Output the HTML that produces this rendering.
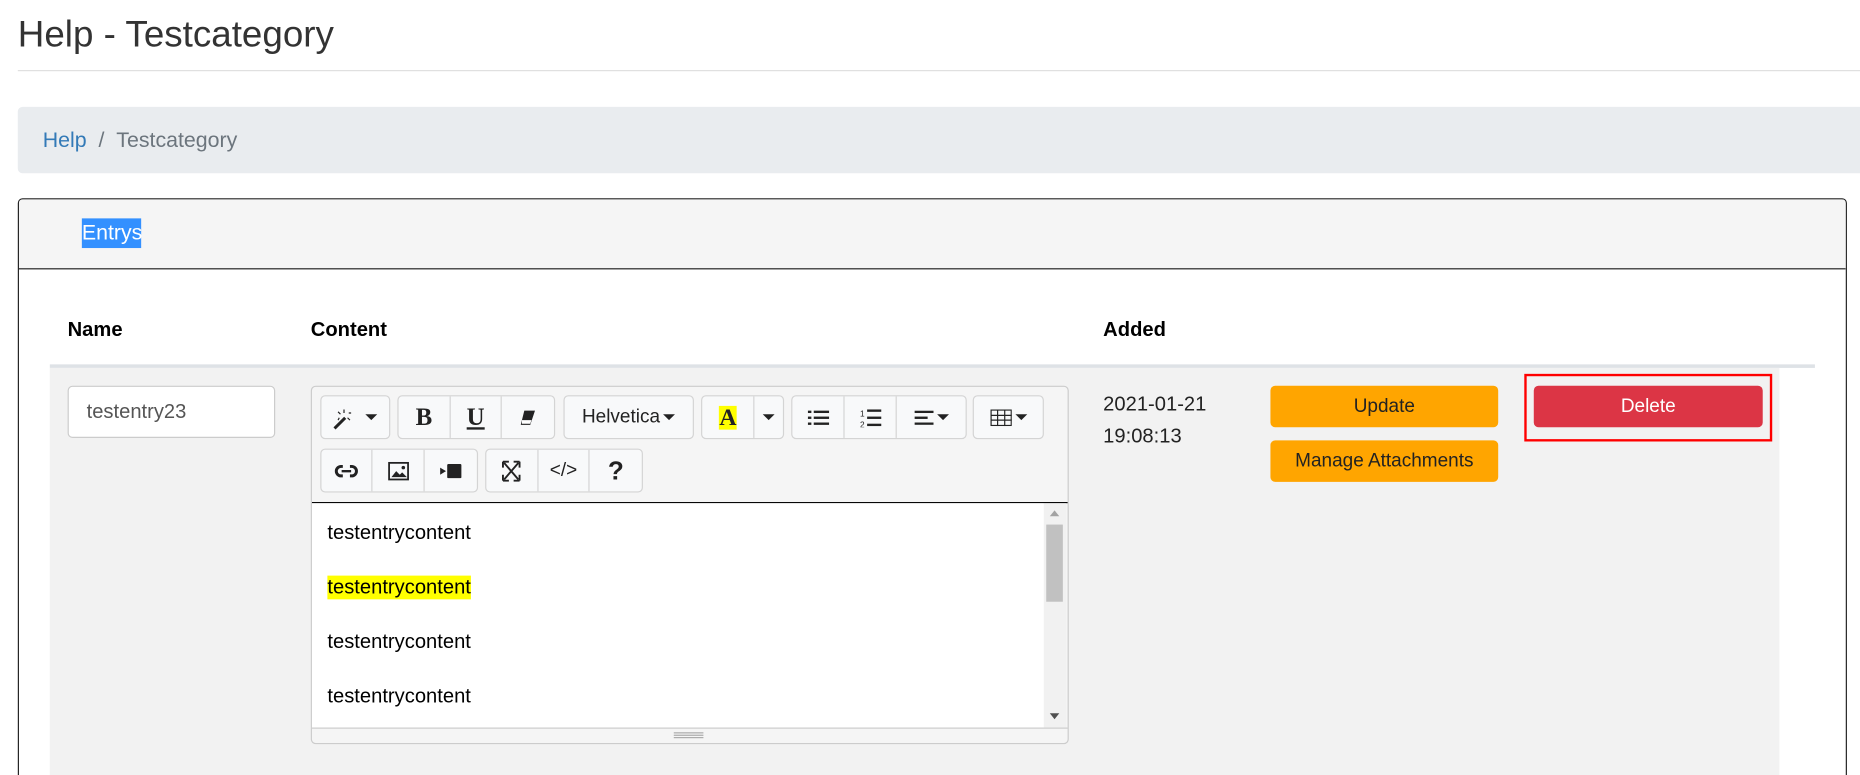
<!DOCTYPE html>
<html><head><meta charset="utf-8"><style>
html,body{margin:0;padding:0;width:1860px;height:775px;overflow:hidden;background:#fff;font-family:"Liberation Sans",Arial,sans-serif;}
#w{position:absolute;left:0;top:0;width:1568px;height:653px;transform:scale(1.18622,1.18683);transform-origin:0 0;overflow:hidden;}
.a{position:absolute;}
.btn{position:absolute;height:37px;background:#f8f9fa;border:1px solid #d4d4d4;border-radius:4px;box-sizing:border-box;display:flex;overflow:hidden}
.btn div{border-right:1px solid #d4d4d4;display:flex;align-items:center;justify-content:center;height:100%;box-sizing:border-box;font-size:16px;color:#222}
.btn div:last-child{border-right:none}
.caret{display:inline-block;width:0;height:0;border-left:5px solid transparent;border-right:5px solid transparent;border-top:5px solid #222;margin-left:3px}
.line{position:absolute;left:13px;font-size:17px;color:#000}
</style></head><body><div id="w">
<div class="a" style="left:15px;top:11px;font-size:31px;color:#333">Help - Testcategory</div>
<div class="a" style="left:15px;right:0;top:59px;height:1px;background:#e0e0e0"></div>
<div class="a" style="left:15px;width:1600px;top:90px;height:56px;background:#e9ecef;border-radius:4px"></div>
<div class="a" style="left:36px;top:108px;font-size:18px;color:#6c757d"><span style="color:#337ab7">Help</span>&nbsp;&nbsp;/&nbsp;&nbsp;Testcategory</div>
<div class="a" style="left:15px;top:167px;width:1542px;height:490px;border:1px solid #222;border-radius:4px;box-sizing:border-box;overflow:hidden">
 <div class="a" style="left:0;top:0;right:0;height:58px;background:#f5f5f5;border-bottom:1px solid #222"></div>
 <div class="a" style="left:53px;top:16px;height:25px;width:50px;background:#3390ff;color:#fff;font-size:18px;line-height:25px">Entrys</div>
</div>
<div class="a" style="left:57px;top:268px;font-size:17px;font-weight:bold">Name</div>
<div class="a" style="left:262px;top:268px;font-size:17px;font-weight:bold">Content</div>
<div class="a" style="left:930px;top:268px;font-size:17px;font-weight:bold">Added</div>
<div class="a" style="left:42px;top:307px;width:1488px;height:3px;background:#dee2e6"></div>
<div class="a" style="left:42px;top:310px;width:1458px;height:343px;background:#f2f2f2"></div>
<div class="a" style="left:57px;top:325px;width:175px;height:44px;background:#fff;border:1px solid #ccc;border-radius:4px;box-sizing:border-box;font-size:17px;color:#555;line-height:42px;padding-left:15px">testentry23</div>
<div class="a" style="left:262px;top:325px;width:639px;height:302px;background:#f5f5f5;border:1px solid #ccc;border-radius:4px;box-sizing:border-box"></div>
<div class="btn" style="left:270px;top:333px;width:59px"><div style="width:57px">
<svg width="24" height="20" viewBox="0 0 24 20"><path d="M1 19 L10 10" stroke="#222" stroke-width="2.5"/><path d="M9 3v3M4 5l2 2M13 6h2M12 10l2 2M5 10l-1 2" stroke="#222" stroke-width="1"/></svg><span class="caret"></span></div></div>
<div class="btn" style="left:335px;top:333px;width:133px"><div style="width:44px;font-family:'Liberation Serif',serif;font-weight:bold;font-size:21px">B</div><div style="width:44px;font-family:'Liberation Serif',serif;font-weight:bold;font-size:21px;text-decoration:underline">U</div><div style="width:44px"><svg width="14" height="14" viewBox="0 0 14 14"><path d="M4 1h9l-4 12H1z" fill="#222"/><path d="M2 9h8l-1 3H2z" fill="#fff"/></svg></div></div>
<div class="btn" style="left:475px;top:333px;width:110px"><div style="width:108px;font-size:16px">Helvetica<span class="caret"></span></div></div>
<div class="btn" style="left:591px;top:333px;width:70px"><div style="width:45px"><span style="background:#ff0;font-family:'Liberation Serif',serif;font-weight:bold;font-size:20px;line-height:20px">A</span></div><div style="width:24px"><span class="caret" style="margin:0"></span></div></div>
<div class="btn" style="left:667px;top:333px;width:148px"><div style="width:44px"><svg width="18" height="14"><g fill="#222"><rect x="0" y="1" width="3" height="2"/><rect x="5" y="1" width="13" height="2"/><rect x="0" y="6" width="3" height="2"/><rect x="5" y="6" width="13" height="2"/><rect x="0" y="11" width="3" height="2"/><rect x="5" y="11" width="13" height="2"/></g></svg></div><div style="width:44px"><svg width="18" height="16"><g fill="#222"><rect x="6" y="1" width="12" height="2"/><rect x="6" y="7" width="12" height="2"/><rect x="6" y="13" width="12" height="2"/></g><text x="0" y="7" font-size="7" fill="#222">1</text><text x="0" y="16" font-size="7" fill="#222">2</text></svg></div><div style="width:58px"><svg width="16" height="12"><g fill="#222"><rect x="0" y="0" width="16" height="2"/><rect x="0" y="5" width="11" height="2"/><rect x="0" y="10" width="16" height="2"/></g></svg><span class="caret"></span></div></div>
<div class="btn" style="left:820px;top:333px;width:60px"><div style="width:58px"><svg width="18" height="14"><rect x="0.5" y="0.5" width="17" height="13" fill="none" stroke="#222"/><path d="M0 5h18M0 9h18M6 0v14M12 0v14" stroke="#222"/></svg><span class="caret"></span></div></div>
<div class="btn" style="left:270px;top:378px;width:133px"><div style="width:44px"><svg width="20" height="12"><rect x="1.5" y="2" width="17" height="8" rx="4" fill="none" stroke="#222" stroke-width="2.5"/><rect x="7" y="0" width="6" height="12" fill="#f8f9fa"/><path d="M6 6h8" stroke="#222" stroke-width="2"/></svg></div><div style="width:44px"><svg width="18" height="16"><rect x="1" y="1" width="16" height="14" fill="none" stroke="#222" stroke-width="1.5"/><path d="M3 13l4-5 3 3 2-2 4 4z" fill="#222"/><circle cx="13" cy="5" r="1.5" fill="#222"/></svg></div><div style="width:45px"><svg width="18" height="12"><path d="M0 3l5 3-5 3z" fill="#222"/><rect x="6" y="0" width="12" height="12" rx="1" fill="#222"/></svg></div></div>
<div class="btn" style="left:409px;top:378px;width:133px"><div style="width:44px"><svg width="16" height="18"><path d="M2 2l12 14M14 2L2 16" stroke="#222" stroke-width="1.6"/><path d="M1 1h5M1 1v5M15 1h-5M15 1v5M1 17h5M1 17v-5M15 17h-5M15 17v-5" stroke="#222" stroke-width="1.6"/></svg></div><div style="width:44px;font-size:16px">&lt;/&gt;</div><div style="width:44px;font-weight:bold;font-size:22px">?</div></div>
<div class="a" style="left:263px;top:423px;width:637px;height:1px;background:#000"></div>
<div class="a" style="left:263px;top:424px;width:617px;height:189px;background:#fff;overflow:hidden">
 <div class="line" style="top:15px">testentrycontent</div>
 <div class="line" style="top:61px;background:#ff0">testentrycontent</div>
 <div class="line" style="top:107px">testentrycontent</div>
 <div class="line" style="top:153px">testentrycontent</div>
</div>
<div class="a" style="left:880px;top:424px;width:19px;height:189px;background:#f1f1f1">
 <div class="a" style="left:5px;top:6px;width:0;height:0;border-left:4px solid transparent;border-right:4px solid transparent;border-bottom:5px solid #a3a3a3"></div>
 <div class="a" style="left:2px;top:18px;width:14px;height:65px;background:#c1c1c1"></div>
 <div class="a" style="left:5px;top:177px;width:0;height:0;border-left:4px solid transparent;border-right:4px solid transparent;border-top:5px solid #505050"></div>
</div>
<div class="a" style="left:263px;top:613px;width:637px;height:1px;background:#ccc"></div>
<div class="a" style="left:568px;top:617px;width:25px;height:5px;border-top:1px solid #aaa;border-bottom:1px solid #aaa;box-sizing:border-box"></div>
<div class="a" style="left:568px;top:619px;width:25px;height:1px;background:#aaa"></div>
<div class="a" style="left:930px;top:327px;font-size:17px;line-height:27px;color:#222">2021-01-21<br>19:08:13</div>
<div class="a" style="left:1071px;top:325px;width:192px;height:35px;background:#ffa500;border-radius:4px;text-align:center;line-height:35px;font-size:16px;color:#222">Update</div>
<div class="a" style="left:1071px;top:371px;width:192px;height:35px;background:#ffa500;border-radius:4px;text-align:center;line-height:35px;font-size:16px;color:#222">Manage Attachments</div>
<div class="a" style="left:1293px;top:325px;width:193px;height:35px;background:#dc3545;border-radius:4px;text-align:center;line-height:35px;font-size:16px;color:#fff">Delete</div>
<div class="a" style="left:1285px;top:315px;width:209px;height:57px;border:2px solid #f00;box-sizing:border-box"></div>
</div></body></html>
